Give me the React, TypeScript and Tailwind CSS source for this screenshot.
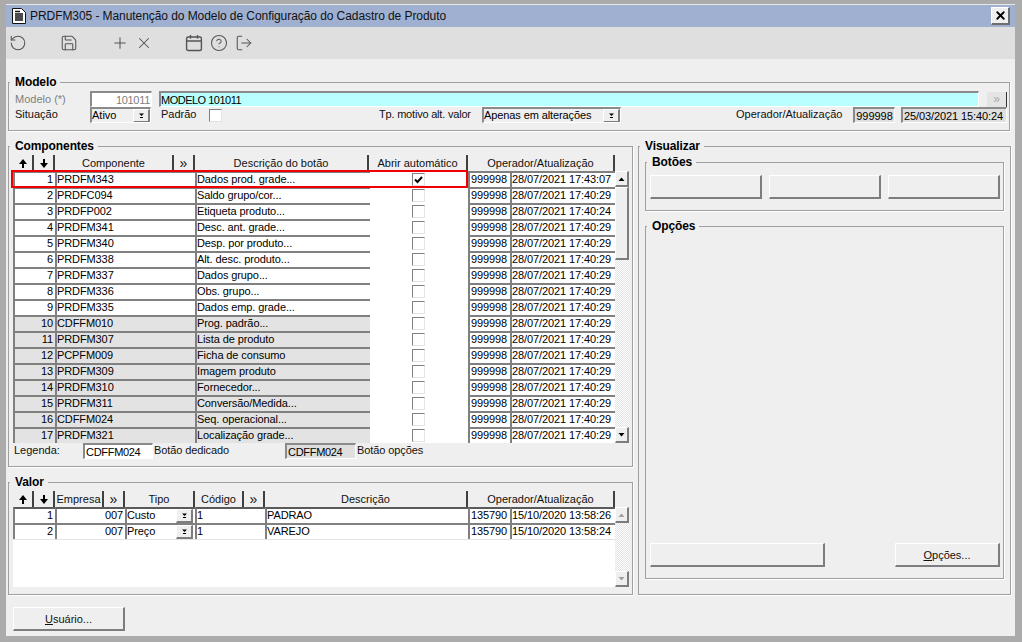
import type { ReactNode } from "react";
import { CircleHelp, LogOut, Plus, RotateCcw, Save, X } from "lucide-react";

type Row = {
  n: number;
  comp: string;
  desc: string;
  time: string;
  checked?: boolean;
};

const rows: Row[] = [
  { n: 1, comp: "PRDFM343", desc: "Dados prod. grade...", time: "17:43:07", checked: true },
  { n: 2, comp: "PRDFC094", desc: "Saldo grupo/cor...", time: "17:40:29" },
  { n: 3, comp: "PRDFP002", desc: "Etiqueta produto...", time: "17:40:24" },
  { n: 4, comp: "PRDFM341", desc: "Desc. ant. grade...", time: "17:40:29" },
  { n: 5, comp: "PRDFM340", desc: "Desp. por produto...", time: "17:40:29" },
  { n: 6, comp: "PRDFM338", desc: "Alt. desc. produto...", time: "17:40:29" },
  { n: 7, comp: "PRDFM337", desc: "Dados grupo...", time: "17:40:29" },
  { n: 8, comp: "PRDFM336", desc: "Obs. grupo...", time: "17:40:29" },
  { n: 9, comp: "PRDFM335", desc: "Dados emp. grade...", time: "17:40:29" },
  { n: 10, comp: "CDFFM010", desc: "Prog. padrão...", time: "17:40:29" },
  { n: 11, comp: "PRDFM307", desc: "Lista de produto", time: "17:40:29" },
  { n: 12, comp: "PCPFM009", desc: "Ficha de consumo", time: "17:40:29" },
  { n: 13, comp: "PRDFM309", desc: "Imagem produto", time: "17:40:29" },
  { n: 14, comp: "PRDFM310", desc: "Fornecedor...", time: "17:40:29" },
  { n: 15, comp: "PRDFM311", desc: "Conversão/Medida...", time: "17:40:29" },
  { n: 16, comp: "CDFFM024", desc: "Seq. operacional...", time: "17:40:29" },
  { n: 17, comp: "PRDFM321", desc: "Localização grade...", time: "17:40:29" },
];

const valores = [
  { n: 1, tipo: "Custo", desc: "PADRAO", time: "13:58:26" },
  { n: 2, tipo: "Preço", desc: "VAREJO", time: "13:58:24" },
];

function Group({ title, className, children }: { title: string; className: string; children: ReactNode }) {
  return (
    <div className={`relative border border-[#a0a0a0] shadow-[1px_1px_0_#fff] ${className}`}>
      <span className="absolute -top-[8px] left-[1px] bg-[#efefef] pl-[5px] pr-[4px] text-[12px] font-bold leading-[14px] tracking-[-0.1px] text-black">
        {title}
      </span>
      {children}
    </div>
  );
}

function Arrow({ down, color = "#000" }: { down?: boolean; color?: string }) {
  return (
    <svg width="7" height="6" viewBox="0 0 7 6" className={down ? "" : "rotate-180"}>
      <path d="M0.5 1h6L3.5 4.5z" fill={color} />
    </svg>
  );
}

function Raised({ className = "", children }: { className?: string; children?: ReactNode }) {
  return (
    <div className={`flex items-center justify-center border-t border-l border-t-white border-l-white border-r-2 border-b-2 border-r-[#7d7d7d] border-b-[#7d7d7d] bg-[#efefef] ${className}`}>
      {children}
    </div>
  );
}

function DropButton() {
  return (
    <Raised className="h-[14px] w-[17px] shrink-0">
      <svg width="7" height="5" viewBox="0 0 7 5">
        <path d="M1 0.5h5L3.5 3z" fill="#000" />
        <path d="M2 4.5h3" stroke="#000" />
      </svg>
    </Raised>
  );
}

function SortIcon({ down }: { down?: boolean }) {
  return (
    <svg width="8" height="9" viewBox="0 0 8 9">
      {down ? <path d="M3 0h2v4h3L4 9 0 4h3z" fill="#000" /> : <path d="M3 9h2V5h3L4 0 0 5h3z" fill="#000" />}
    </svg>
  );
}

function Head({ children, className = "" }: { children?: ReactNode; className?: string }) {
  return (
    <div className={`flex h-[16px] items-center justify-center overflow-hidden whitespace-nowrap border-r-2 border-r-[#404040] bg-[#efefef] text-[#111] ${className}`}>
      {children}
    </div>
  );
}

function Chevrons() {
  return <span className="text-[14px] leading-[12px]">»</span>;
}

function Cell({ children, className = "" }: { children?: ReactNode; className?: string }) {
  return (
    <div className={`h-[16px] overflow-hidden whitespace-nowrap border-t-2 border-l-2 border-l-[#808080] pr-[2px] leading-[12px] tracking-[-0.1px] text-black ${className}`}>
      {children}
    </div>
  );
}

function Check({ checked }: { checked?: boolean }) {
  return (
    <div className="flex h-[13px] w-[13px] items-center justify-center border-t border-l border-r border-b border-t-[#808080] border-l-[#808080] border-r-[#e3e3e3] border-b-[#e3e3e3] bg-white">
      {checked && (
        <svg width="9" height="8" viewBox="0 0 9 8">
          <path d="M1 3.5l2.5 2.5L8 1" fill="none" stroke="#000" strokeWidth="2" />
        </svg>
      )}
    </div>
  );
}

function CalendarIcon() {
  return (
    <svg width="18" height="18" viewBox="0 0 18 18" fill="none" stroke="#555" strokeWidth="1.4">
      <rect x="1.6" y="3" width="14.8" height="13.5" rx="1.5" />
      <path d="M1.6 7h14.8M5.5 1v3.5M12.5 1v3.5" />
    </svg>
  );
}

function Field({ className = "", children }: { className?: string; children?: ReactNode }) {
  return (
    <div className={`flex h-[16px] shrink-0 items-center overflow-hidden whitespace-nowrap border-t-2 border-l-2 border-t-[#8a8a8a] border-l-[#8a8a8a] border-r border-b border-r-white border-b-white ${className}`}>
      {children}
    </div>
  );
}

export default function App() {
  return (
    <div className="h-[642px] w-[1022px] overflow-hidden bg-[#ababab] pl-[6px] pt-[4px] font-['Liberation_Sans',Arial,sans-serif] text-[11px] leading-[14px] text-[#111]">
      <div className="flex h-[632px] w-[1009px] flex-col border-t border-[#e8e8e8] bg-[#efefef]">
        {/* title bar */}
        <div className="flex h-[22px] shrink-0 items-center bg-[#9fb0d1] pl-[6px] pr-[5px]">
          <svg width="14" height="16" viewBox="0 0 14 16" className="shrink-0">
            <path d="M0.5 0.5h9l4 4v11h-13z" fill="#fff" stroke="#111" />
            <path d="M3 3.5h5M3 6h8M3 8h8M3 10h8M3 12h8" stroke="#111" strokeWidth="1.4" />
          </svg>
          <span className="ml-[4px] text-[12px] tracking-[-0.07px] text-[#111]">
            PRDFM305 - Manutenção do Modelo de Configuração do Cadastro de Produto
          </span>
          <div className="ml-auto flex h-[18px] w-[19px] items-center justify-center border-t border-l border-t-white border-l-white border-r-2 border-b-2 border-r-[#6d6d6d] border-b-[#6d6d6d] bg-[#efefef]">
            <X size={13} strokeWidth={3.4} color="#000" />
          </div>
        </div>

        {/* toolbar */}
        <div className="flex h-[32px] shrink-0 items-center bg-[#dfdfdf] pl-[3px] text-[#555]">
          <RotateCcw size={18} strokeWidth={1.4} />
          <Save size={18} strokeWidth={1.4} className="ml-[33px]" />
          <Plus size={18} strokeWidth={1.4} className="ml-[33px]" />
          <X size={18} strokeWidth={1.4} className="ml-[6px]" />
          <div className="ml-[32px]">
            <CalendarIcon />
          </div>
          <CircleHelp size={18} strokeWidth={1.4} className="ml-[7px]" />
          <LogOut size={18} strokeWidth={1.4} className="ml-[7px]" />
        </div>

        <div className="flex-1 pl-[2px] pt-[23px]">
          {/* Modelo */}
          <Group title="Modelo" className="h-[49px] w-[1002px] pl-[6px] pt-[8px]">
            <div className="flex h-[16px] items-center">
              <span className="w-[75px] shrink-0 text-[#808080]">Modelo (*)</span>
              <Field className="w-[62px] justify-end bg-white pr-[1px] tracking-[-0.3px] text-[#808080]">101011</Field>
              <Field className="ml-[7px] w-[820px] bg-[#b9ffff] text-black tracking-[-0.5px]">MODELO 101011</Field>
              <div className="ml-[8px] flex h-[15px] w-[20px] items-center justify-center border-r border-r-[#333] bg-[#e4e4e4] text-[12px] text-[#aaa]">
                »
              </div>
            </div>
            <div className="flex h-[16px] items-center">
              <span className="-mt-[2px] w-[75px] shrink-0">Situação</span>
              <Field className="w-[61px] justify-between bg-[#efefef] text-black">
                <span className="-mt-[2px]">Ativo</span>
                <DropButton />
              </Field>
              <span className="-mt-[2px] ml-[10px] w-[48px] shrink-0">Padrão</span>
              <Check />
              <span className="-mt-[2px] ml-[157px] w-[103px] shrink-0 tracking-[-0.2px]">Tp. motivo alt. valor</span>
              <Field className="w-[139px] justify-between bg-[#efefef] text-black">
                <span className="-mt-[2px] tracking-[-0.1px]">Apenas em alterações</span>
                <DropButton />
              </Field>
              <span className="-mt-[2px] ml-[115px] w-[117px] shrink-0">Operador/Atualização</span>
              <Field className="w-[42px] justify-center bg-[#dfdfdf] text-black">999998</Field>
              <Field className="ml-[6px] w-[106px] bg-[#dfdfdf] pl-[1px] tracking-[-0.1px] text-black">25/03/2021 15:40:24</Field>
            </div>
          </Group>

          <div className="mt-[15px] flex">
            <div className="w-[625px] shrink-0">
              {/* Componentes */}
              <Group title="Componentes" className="h-[321px] pl-[4px] pt-[8px]">
                <div className="grid w-[602px] grid-cols-[21px_21px_119px_21px_174px_99px_147px]">
                  <Head><SortIcon /></Head>
                  <Head><SortIcon down /></Head>
                  <Head>Componente</Head>
                  <Head><Chevrons /></Head>
                  <Head>Descrição do botão</Head>
                  <Head>Abrir automático</Head>
                  <Head>Operador/Atualização</Head>
                </div>
                <div className="relative flex">
                  <div className="w-[602px] shrink-0">
                    {rows.map((r) => (
                      <div key={r.n} className="grid grid-cols-[42px_140px_175px_98px_42px_105px] bg-white">
                        <Cell className={`border-t-[#808080] text-right ${r.n >= 10 ? "bg-[#e3e3e3]" : "bg-white"}`}>{r.n}</Cell>
                        <Cell className={`border-t-[#808080] ${r.n >= 10 ? "bg-[#e3e3e3]" : "bg-white"}`}>{r.comp}</Cell>
                        <Cell className={`border-t-[#808080] ${r.n >= 10 ? "bg-[#e3e3e3]" : "bg-white"}`}>{r.desc}</Cell>
                        <div className="flex h-[16px] items-center justify-center pr-[2px] pt-[1px]">
                          <Check checked={r.checked} />
                        </div>
                        <Cell className="border-t-[#808080] bg-white text-center">999998</Cell>
                        <Cell className="border-t-[#808080] bg-white">28/07/2021 {r.time}</Cell>
                      </div>
                    ))}
                  </div>
                  <div className="flex h-[272px] w-[14px] shrink-0 flex-col bg-[repeating-conic-gradient(#e2e2e2_0_25%,#fff_0_50%)] bg-[length:2px_2px]">
                    <Raised className="h-[16px] shrink-0"><Arrow /></Raised>
                    <Raised className="h-[73px] shrink-0" />
                    <Raised className="mt-auto h-[16px] shrink-0"><Arrow down /></Raised>
                  </div>
                  {/* selected row outline */}
                  <div className="pointer-events-none absolute -left-[2px] -top-[1px] h-[18px] w-[457px] border-2 border-[#f00000]" />
                </div>
                <div className="flex h-[15px] items-start">
                  <span className="ml-[1px] w-[69px] shrink-0">Legenda:</span>
                  <Field className="h-[15px] w-[70px] bg-white pl-[1px] tracking-[-0.3px] text-black">CDFFM024</Field>
                  <span className="ml-[1px] w-[131px] shrink-0 tracking-[-0.1px]">Botão dedicado</span>
                  <Field className="h-[15px] w-[71px] bg-[#dfdfdf] pl-[1px] tracking-[-0.3px] text-black">CDFFM024</Field>
                  <span className="ml-[1px] tracking-[-0.1px]">Botão opções</span>
                </div>
              </Group>

              {/* Valor */}
              <Group title="Valor" className="mt-[15px] h-[113px] pl-[4px] pt-[8px]">
                <div className="grid w-[602px] grid-cols-[21px_21px_49px_21px_70px_49px_21px_203px_147px]">
                  <Head><SortIcon /></Head>
                  <Head><SortIcon down /></Head>
                  <Head>Empresa</Head>
                  <Head><Chevrons /></Head>
                  <Head>Tipo</Head>
                  <Head>Código</Head>
                  <Head><Chevrons /></Head>
                  <Head>Descrição</Head>
                  <Head>Operador/Atualização</Head>
                </div>
                <div className="flex">
                  <div className="h-[80px] w-[602px] shrink-0 bg-white">
                    {valores.map((v) => {
                      const top = v.n === 1 ? "border-t-[#5a5a5a]" : "border-t-[#808080]";
                      return (
                        <div key={v.n} className="grid grid-cols-[42px_70px_70px_70px_203px_42px_105px]">
                          <Cell className={`${top} text-right`}>{v.n}</Cell>
                          <Cell className={`${top} text-right`}>007</Cell>
                          <Cell className={`${top} flex items-start justify-between pr-0`}>
                            {v.tipo}
                            <DropButton />
                          </Cell>
                          <Cell className={top}>1</Cell>
                          <Cell className={top}>{v.desc}</Cell>
                          <Cell className={`${top} text-center`}>135790</Cell>
                          <Cell className={top}>15/10/2020 {v.time}</Cell>
                        </div>
                      );
                    })}
                    <div className="h-[1px] bg-[#e3e3e3]" />
                  </div>
                  <div className="flex h-[80px] w-[14px] shrink-0 flex-col bg-[repeating-conic-gradient(#e2e2e2_0_25%,#fff_0_50%)] bg-[length:2px_2px]">
                    <Raised className="h-[16px] shrink-0"><Arrow color="#a0a0a0" /></Raised>
                    <Raised className="mt-auto h-[16px] shrink-0"><Arrow down color="#a0a0a0" /></Raised>
                  </div>
                </div>
              </Group>

              <Raised className="ml-[5px] mt-[12px] h-[24px] w-[112px] text-[#111]">
                <span>
                  <span className="underline">U</span>suário...
                </span>
              </Raised>
            </div>

            {/* Visualizar */}
            <Group title="Visualizar" className="ml-[5px] h-[449px] w-[373px] px-[6px] pt-[15px]">
              <Group title="Botões" className="h-[49px] w-[359px]">
                <div className="flex gap-[7px] pl-[4px] pt-[12px]">
                  <Raised className="h-[24px] w-[112px]" />
                  <Raised className="h-[24px] w-[112px]" />
                  <Raised className="h-[24px] w-[112px]" />
                </div>
              </Group>
              <Group title="Opções" className="mt-[15px] flex h-[353px] w-[359px] items-end justify-between pb-[11px] pl-[4px] pr-[3px]">
                <Raised className="h-[24px] w-[175px]" />
                <Raised className="h-[24px] w-[105px] text-[#111]">
                  <span>
                    <span className="underline">O</span>pções...
                  </span>
                </Raised>
              </Group>
            </Group>
          </div>
        </div>
      </div>
    </div>
  );
}
